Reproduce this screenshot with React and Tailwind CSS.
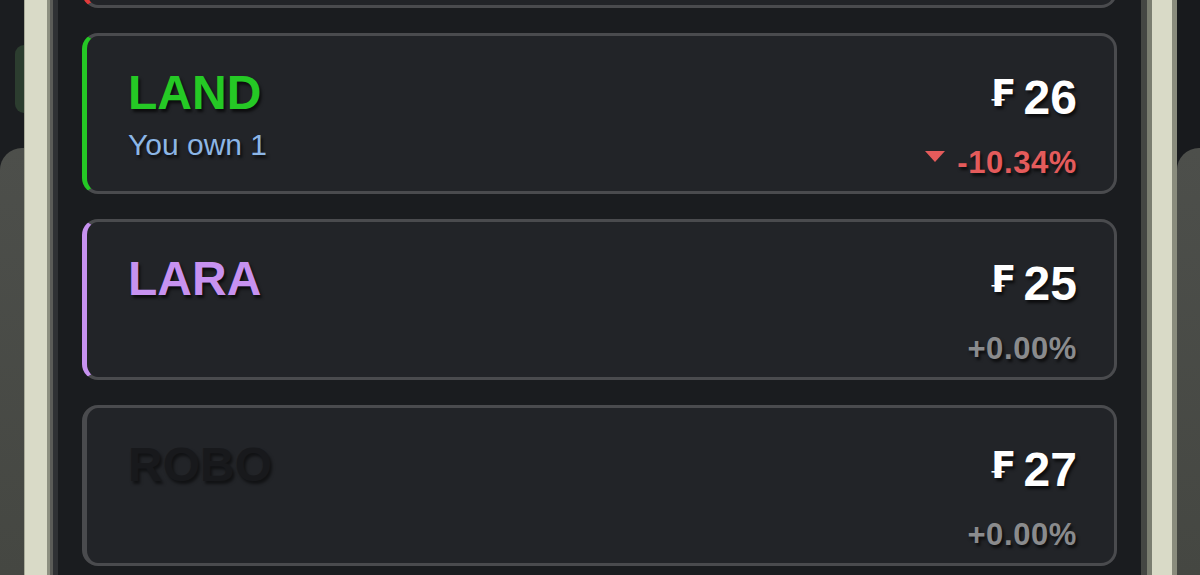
import React from 'react';

const stocks = [
    { name: 'PREV', color: 'text-[#e23b3b]', edge: 'border-l-[#e23b3b]', price: 0, change: '', hidden: true },
    { name: 'LAND', color: 'text-[#25c925]', edge: 'border-l-[#25c925]', owned: 1, price: 26, change: '-10.34%', dir: 'down' },
    { name: 'LARA', color: 'text-[#c792f0]', edge: 'border-l-[#c792f0]', price: 25, change: '+0.00%', dir: 'flat' },
    { name: 'ROBO', color: 'text-[#18191c]', edge: 'border-l-[#4a4b4e]', price: 27, change: '+0.00%', dir: 'flat', dim: true },
];

const shadow = '[text-shadow:2px_3px_3px_rgba(0,0,0,0.65)]';

const StockCard = ({ stock }) => {
    const changeColor =
        stock.dir === 'down' ? 'text-[#e45b5b]' : stock.dir === 'up' ? 'text-[#3fcf5a]' : 'text-[#8a8b8d]';

    return (
        <div
            className={`flex h-[161px] shrink-0 justify-between rounded-[16px] border-[3px] border-l-[5px] border-[#4a4b4e] bg-[#222428] pl-[41px] pr-[37px] pt-[33px] ${stock.edge}`}
        >
            {!stock.hidden && (
                <>
                    {/* Ticker and ownership */}
                    <div className="flex flex-col">
                        <span
                            className={`text-[48px] font-bold leading-none ${stock.color} ${
                                stock.dim ? '[text-shadow:2px_3px_3px_rgba(0,0,0,0.5)]' : shadow
                            }`}
                        >
                            {stock.name}
                        </span>
                        {stock.owned && (
                            <span className={`mt-[13px] text-[30px] leading-none text-[#8cb6e6] ${shadow}`}>
                                You own {stock.owned}
                            </span>
                        )}
                    </div>

                    {/* Price and change */}
                    <div className="mt-[5px] flex flex-col items-end">
                        <div className={`flex items-start gap-[9px] text-white ${shadow}`}>
                            <span className="mt-[1px] text-[37px] font-bold leading-none [font-family:'DejaVu_Sans',sans-serif]">
                                ₣
                            </span>
                            <span className="text-[48px] font-bold leading-none">{stock.price}</span>
                        </div>
                        <div className={`mt-[25px] flex items-start gap-[12px] ${changeColor}`}>
                            {stock.dir === 'down' && (
                                <svg width="20" height="11" viewBox="0 0 20 11" className="mt-[4px]">
                                    <polygon points="0,0 20,0 10,11" fill="#e45b5b" />
                                </svg>
                            )}
                            <span className={`text-[31px] font-bold leading-none tracking-[0.6px] ${shadow}`}>
                                {stock.change}
                            </span>
                        </div>
                    </div>
                </>
            )}
        </div>
    );
};

const App = () => {
    return (
        <div className="flex h-[575px] w-[1200px] overflow-hidden bg-[#1b1d20] [font-family:'Liberation_Sans',Arial,sans-serif]">
            {/* left backdrop */}
            <div className="flex w-[24px] shrink-0 flex-col bg-[#1b1d20]">
                <div className="ml-[15px] mt-[45px] h-[68px] rounded-l-[10px] bg-[#2c3d2f]" />
                <div className="mt-[35px] flex-1 rounded-tl-[22px] bg-gradient-to-b from-[#4d4f4b] to-[#454742]" />
            </div>

            {/* left frame */}
            <div className="w-[23px] shrink-0 border-l border-[#a9ab9a] bg-[#d9dac7]" />
            <div className="w-[3px] shrink-0 bg-[#8d8f80]" />
            <div className="w-[3px] shrink-0 bg-[#5b5c58]" />
            <div className="w-[5px] shrink-0 bg-[#2f3134]" />

            {/* list panel */}
            <div className="flex min-w-0 flex-1 flex-col gap-[25px] bg-[#1a1c1f] px-[24px]">
                <div className="-mt-[153px] flex flex-col gap-[25px]">
                    {stocks.map((s) => (
                        <StockCard key={s.name} stock={s} />
                    ))}
                </div>
            </div>

            {/* right frame */}
            <div className="w-[6px] shrink-0 bg-[#444643]" />
            <div className="w-[5px] shrink-0 bg-[#7a7d70]" />
            <div className="w-[20px] shrink-0 bg-[#d9dac7]" />
            <div className="w-[5px] shrink-0 bg-[#8a8c7d]" />

            {/* right backdrop */}
            <div className="flex w-[23px] shrink-0 flex-col bg-[#181a1d]">
                <div className="mt-[148px] flex-1 rounded-tl-[22px] bg-gradient-to-b from-[#4d4f4b] to-[#454742]" />
            </div>
        </div>
    );
};

export default App;
